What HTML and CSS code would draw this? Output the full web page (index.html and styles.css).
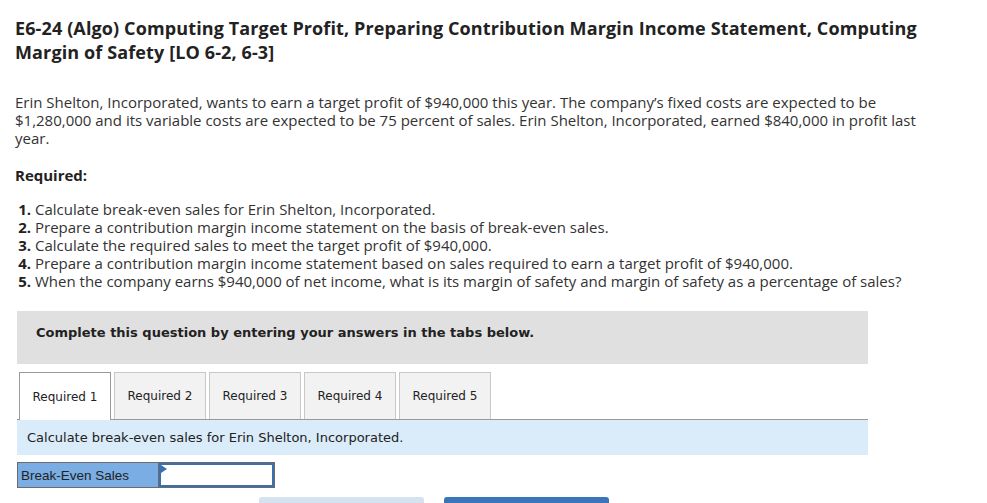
FILE: index.html
```html
<!DOCTYPE html>
<html>
<head>
<meta charset="utf-8">
<link rel="stylesheet" href="styles.css">
</head>
<body>
<div class="page">
  <h1 class="title">E6-24 (Algo) Computing Target Profit, Preparing Contribution Margin Income Statement, Computing Margin of Safety [LO 6-2, 6-3]</h1>
  <p class="intro">Erin Shelton, Incorporated, wants to earn a target profit of $940,000 this year. The company’s fixed costs are expected to be $1,280,000 and its variable costs are expected to be 75 percent of sales. Erin Shelton, Incorporated, earned $840,000 in profit last year.</p>
  <p class="req-head">Required:</p>
  <ol class="req-list">
    <li>Calculate break-even sales for Erin Shelton, Incorporated.</li>
    <li>Prepare a contribution margin income statement on the basis of break-even sales.</li>
    <li>Calculate the required sales to meet the target profit of $940,000.</li>
    <li>Prepare a contribution margin income statement based on sales required to earn a target profit of $940,000.</li>
    <li>When the company earns $940,000 of net income, what is its margin of safety and margin of safety as a percentage of sales?</li>
  </ol>
  <div class="panel">
    <div class="notice">Complete this question by entering your answers in the tabs below.</div>
    <div class="tabs">
      <div class="tab active">Required 1</div>
      <div class="tab">Required 2</div>
      <div class="tab">Required 3</div>
      <div class="tab">Required 4</div>
      <div class="tab">Required 5</div>
    </div>
    <div class="prompt">Calculate break-even sales for Erin Shelton, Incorporated.</div>
    <div class="answer-row">
      <div class="answer-label">Break-Even Sales</div>
      <div class="answer-input"><span class="flag"></span></div>
    </div>
    <div class="buttons">
      <div class="btn btn-prev"></div>
      <div class="btn btn-next"></div>
    </div>
  </div>
</div>
</body>
</html>
```

FILE: styles.css
```css
html, body {
  margin: 0;
  padding: 0;
  background: #fff;
}
.page {
  width: 920px;
  padding: 0 15px;
  font-family: "Open Sans", "Liberation Sans", sans-serif;
  color: #333;
  overflow: hidden;
  height: 503px;
}
.title {
  margin: 16px 0 0 0;
  font-size: 18px;
  line-height: 24px;
  font-weight: 700;
  letter-spacing: 0.12px;
  color: #222;
}
.intro,
.req-head,
.req-list {
  font-size: 15px;
  line-height: 18px;
}
.intro {
  margin: 29px 0 0 0;
}
.req-head {
  margin: 19px 0 0 0;
  font-weight: 700;
  color: #222;
}
.req-list {
  margin: 16px 0 0 0;
  padding-left: 20px;
}
.req-list li::marker {
  font-weight: 700;
  color: #222;
}
.panel {
  margin: 21px 0 0 2px;
  width: 851px;
}
.notice {
  background: #e0e0e0;
  padding: 14px 19px 23px;
  font-family: "DejaVu Sans", Verdana, sans-serif;
  font-size: 13px;
  line-height: 16px;
  font-weight: 700;
  color: #222;
}
.tabs {
  display: flex;
  gap: 3px;
  margin-top: 8px;
  padding-left: 2px;
  border-bottom: 1px solid #999;
}
.tab {
  width: 90px;
  height: 46px;
  border: 1px solid #c8c8c8;
  border-bottom: none;
  background: #f2f2f2;
  display: flex;
  align-items: center;
  justify-content: center;
  font-family: "DejaVu Sans", Verdana, sans-serif;
  font-size: 12px;
  color: #222;
}
.tab.active {
  background: #fff;
  border-color: #9a9a9a;
  height: 47px;
  margin-bottom: -1px;
}
.prompt {
  background: #daebf9;
  height: 35px;
  padding-left: 10px;
  display: flex;
  align-items: center;
  font-family: "DejaVu Sans", Verdana, sans-serif;
  font-size: 13px;
  color: #222;
}
.answer-row {
  display: flex;
  margin-top: 7px;
  width: 256px;
  height: 24px;
  border: 1px solid #6b6b6b;
}
.answer-label {
  width: 141px;
  background: #79ade3;
  border-right: 1px solid #6b6b6b;
  font-family: "Liberation Sans", Arial, sans-serif;
  font-size: 13.5px;
  color: #222;
  display: flex;
  align-items: center;
  padding-left: 3px;
  box-sizing: border-box;
}
.answer-input {
  position: relative;
  flex: 1;
  background: #fff;
  border: 2px solid #3c6fb2;
}
.flag {
  position: absolute;
  left: 0;
  top: 0;
  width: 0;
  height: 0;
  border-top: 4px solid transparent;
  border-bottom: 4px solid transparent;
  border-left: 6px solid #3c6fb2;
}
.buttons {
  display: flex;
  gap: 20px;
  margin-top: 9px;
  padding-left: 242px;
}
.btn {
  width: 165px;
  height: 20px;
  border-radius: 3px 3px 0 0;
}
.btn-prev {
  background: #d5e2f0;
}
.btn-next {
  background: #3a75b9;
}
```
